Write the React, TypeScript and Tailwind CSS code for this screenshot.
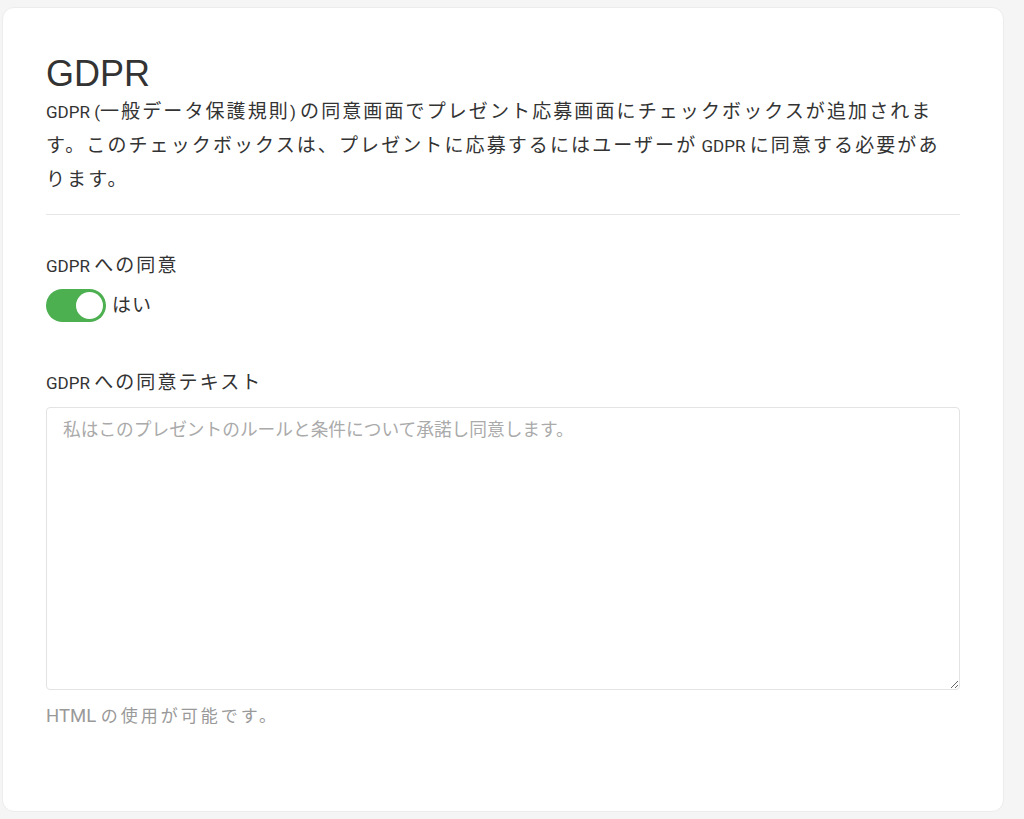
import { useState } from 'react'

const BODY = { fontFamily: 'Roboto, "Noto Sans CJK JP", sans-serif' }

// latin runs are set a bit smaller than the japanese text around them
function L({ children, size = 'text-[17px]' }: { children: React.ReactNode; size?: string }) {
  return <span className={`${size} tracking-normal`}>{children}</span>
}

function Toggle({ on, onChange }: { on: boolean; onChange: (v: boolean) => void }) {
  return (
    <button
      type="button"
      onClick={() => onChange(!on)}
      className={`relative h-[33px] w-[60px] shrink-0 rounded-full transition-colors ${on ? 'bg-[#4caf50]' : 'bg-[#d5d5d5]'}`}
    >
      <span
        className={`absolute top-[3px] h-[27px] w-[27px] rounded-full bg-white transition-all ${on ? 'left-[30px]' : 'left-[3px]'}`}
      />
    </button>
  )
}

export default function App() {
  const [consent, setConsent] = useState(true)
  const [text, setText] = useState('')

  return (
    <div className="min-h-screen bg-[#f5f5f5] pl-[2px] pt-[7px]" style={BODY}>
      <div className="h-[805px] w-[1002px] rounded-[12px] border border-[#ececec] bg-white px-[43px] pt-[44px] text-[#333]">
        {/* Header */}
        <h1 className="text-[36px] leading-[43px] font-normal" style={{ fontFamily: '"Liberation Sans", Arial, sans-serif' }}>
          GDPR
        </h1>
        <p className="text-[19px] leading-[33px] tracking-[2.1px]">
          <L>GDPR (</L>一般データ保護規則<L>) </L>の同意画面でプレゼント応募画面にチェックボックスが追加されます。このチェックボックスは、プレゼントに応募するにはユーザーが<L> GDPR </L>に同意する必要があります。
        </p>
        <div className="mt-[18px] border-t border-[#e6e6e6]" />

        {/* Consent switch */}
        <div className="mt-[39px] text-[19px] leading-[24px] tracking-[2.1px]">
          <L>GDPR </L>への同意
        </div>
        <label className="mt-[11px] flex items-center gap-[6px]">
          <Toggle on={consent} onChange={setConsent} />
          <span className="text-[19px] leading-[24px] tracking-[1px]">{consent ? 'はい' : 'いいえ'}</span>
        </label>

        {/* Consent text */}
        <div className="mt-[49px] text-[19px] leading-[24px] tracking-[2.1px]">
          <L>GDPR </L>への同意テキスト
        </div>
        <textarea
          value={text}
          onChange={(e) => setText(e.target.value)}
          placeholder="私はこのプレゼントのルールと条件について承諾し同意します。"
          className="mt-[12px] block h-[283px] w-full rounded-[4px] border border-[#e3e3e3] px-[16px] pt-[10px] text-[17.7px] leading-[24px] text-[#333] outline-none placeholder:text-[#aaa]"
          style={BODY}
        />
        <div className="mt-[14px] text-[17px] leading-[24px] tracking-[3px] text-[#999]">
          <L size="text-[18.5px]">HTML </L>の使用が可能です。
        </div>
      </div>
    </div>
  )
}
